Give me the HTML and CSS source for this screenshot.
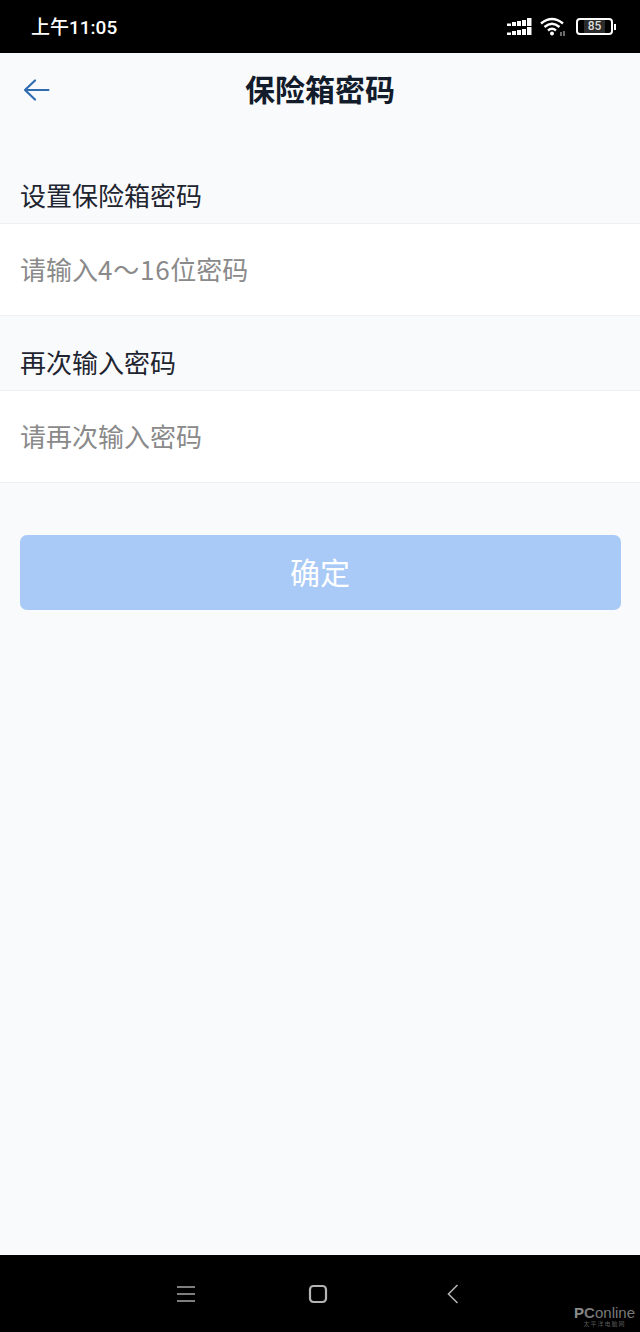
FILE: index.html
```html
<!DOCTYPE html>
<html lang="zh-CN">
<head>
<meta charset="utf-8">
<title>保险箱密码</title>
<link rel="stylesheet" href="styles.css">
</head>
<body>
<div class="screen">
  <header class="status">
    <span class="time">上午11:05</span>
    <div class="status-icons">
      <svg class="signal" width="25" height="18" viewBox="0 0 25 18" fill="#fff">
        <rect x="0" y="5.500" width="4" height="2.500"/><rect x="5" y="4" width="4" height="4"/><rect x="10" y="3" width="4" height="5"/><rect x="15" y="2" width="4" height="6"/><rect x="20" y="0" width="4.500" height="8"/>
        <rect x="0" y="14.500" width="4" height="2.500"/><rect x="5" y="13" width="4" height="4"/><rect x="10" y="12" width="4" height="5"/><rect x="15" y="11" width="4" height="6"/><rect x="20" y="9" width="4.500" height="8"/>
      </svg>
      <svg class="wifi" width="26" height="20" viewBox="0 0 26 20" fill="none" stroke="#fff">
        <path d="M1 6.500 Q12 -2.500 23 6.500" stroke-width="2.400"/>
        <path d="M4.500 10 Q12 3.500 19.500 10" stroke-width="2.400"/>
        <path d="M8 13.500 Q12 10 16 13.500" stroke-width="2.400"/>
        <circle cx="12" cy="16.500" r="2" fill="#fff" stroke="none"/>
        <path d="M21 19v-4M24 19v-5" stroke-width="1.200" opacity=".7"/>
      </svg>
      <div class="battery">
        <div class="battery-body"><span class="battery-level">85</span></div>
        <div class="battery-tip"></div>
      </div>
    </div>
  </header>

  <nav class="titlebar">
    <svg class="back" width="28" height="24" viewBox="0 0 28 24" fill="none" stroke="#2f6cb0" stroke-width="2.200" stroke-linecap="round" stroke-linejoin="round">
      <path d="M2 12H25.500M12 2.500L2 12L12 21.500"/>
    </svg>
    <h1 class="title">保险箱密码</h1>
  </nav>

  <main class="content">
    <div class="label label-first">设置保险箱密码</div>
    <div class="field">请输入<span class="digits">4～16</span>位密码</div>
    <div class="label label-next">再次输入密码</div>
    <div class="field">请再次输入密码</div>
    <div class="submit-wrap">
      <div class="submit">确定</div>
    </div>
  </main>

  <footer class="navbar">
    <svg class="nav-icon" width="20" height="18" viewBox="0 0 20 18" fill="none" stroke="#a8a8a8" stroke-width="1.600">
      <path d="M1 2H19M1 9H19M1 16H19"/>
    </svg>
    <svg class="nav-icon" width="20" height="20" viewBox="0 0 20 20" fill="none" stroke="#b4b4b4" stroke-width="2.200">
      <rect x="2" y="2" width="16" height="16" rx="3.500"/>
    </svg>
    <svg class="nav-icon nav-back" width="14" height="20" viewBox="0 0 14 20" fill="none" stroke="#b0b0b0" stroke-width="1.600">
      <path d="M11.500 1L2.500 10L11.500 19"/>
    </svg>
    <div class="watermark">
      <span class="wm-brand"><b class="wm-p">P</b><b>C</b>online</span>
      <span class="wm-sub">太平洋电脑网</span>
    </div>
  </footer>
</div>
</body>
</html>
```

FILE: styles.css
```css
* { box-sizing: border-box; margin: 0; padding: 0; }
html, body { width: 640px; height: 1332px; overflow: hidden; }
body { font-family: "Noto Sans CJK SC", "Roboto", sans-serif; background: #f9fafc; }
.screen { width: 640px; height: 1332px; display: flex; flex-direction: column; }

.status { height: 53px; flex: none; background: #000; display: flex; align-items: center; justify-content: space-between; padding: 3px 24px 0 31px; color: #fff; }
.time { font-size: 19px; line-height: 48px; font-weight: 500; font-family: "Roboto", "Noto Sans CJK SC", sans-serif; }
.status-icons { display: flex; align-items: center; margin-top: -2px; }
.signal { margin-right: 8px; }
.wifi { margin-right: 10px; }
.battery { display: flex; align-items: center; gap: 1px; margin-top: -1px; }
.battery-body { width: 37px; height: 17px; border: 2px solid #fff; border-radius: 4px; display: flex; align-items: center; justify-content: center; }
.battery-level { font-size: 12px; line-height: 13px; font-weight: 500; color: #ddd; background: #2b2b2b; padding: 0 4px; font-family: "Roboto", sans-serif; }
.battery-tip { width: 2px; height: 6px; background: #fff; }

.titlebar { height: 74px; flex: none; position: relative; display: flex; align-items: center; justify-content: center; background: #f9fafc; }
.back { position: absolute; left: 23px; top: 25px; }
.title { font-size: 30px; line-height: 40px; font-weight: 700; color: #131c2b; margin-top: -5px; }

.content { flex: 1; display: flex; flex-direction: column; }
.label { font-size: 26px; line-height: 36px; color: #1e2530; padding-left: 20px; }
.label-first { margin-top: 50px; height: 46px; }
.label-next { margin-top: 28px; height: 46px; }
.field { height: 93px; background: #fff; border-top: 1px solid #eef0f2; border-bottom: 1px solid #eef0f2; padding-left: 20px; font-size: 26px; line-height: 90px; color: #8a8a8a; }
.digits { letter-spacing: 0.750px; }
.submit-wrap { padding: 52px 19.500px 0 19.500px; }
.submit { height: 75px; border-radius: 7px; background: #a9caf7; color: #fff; font-size: 30px; line-height: 73px; text-align: center; }

.navbar { height: 77px; flex: none; background: #000; position: relative; display: flex; align-items: center; justify-content: center; gap: 112px; padding: 0 4px 0 0; }
.nav-back { margin-left: 6px; }
.watermark { position: absolute; right: 5px; top: 50px; display: flex; flex-direction: column; align-items: center; color: #7a7a7a; font-family: "Liberation Sans", sans-serif; }
.wm-brand { font-size: 15px; line-height: 15px; }
.wm-p { color: #8c8c8c; }
.wm-sub { font-size: 6px; line-height: 7px; color: #555; font-family: "Noto Sans CJK SC", sans-serif; letter-spacing: 1px; }
```
